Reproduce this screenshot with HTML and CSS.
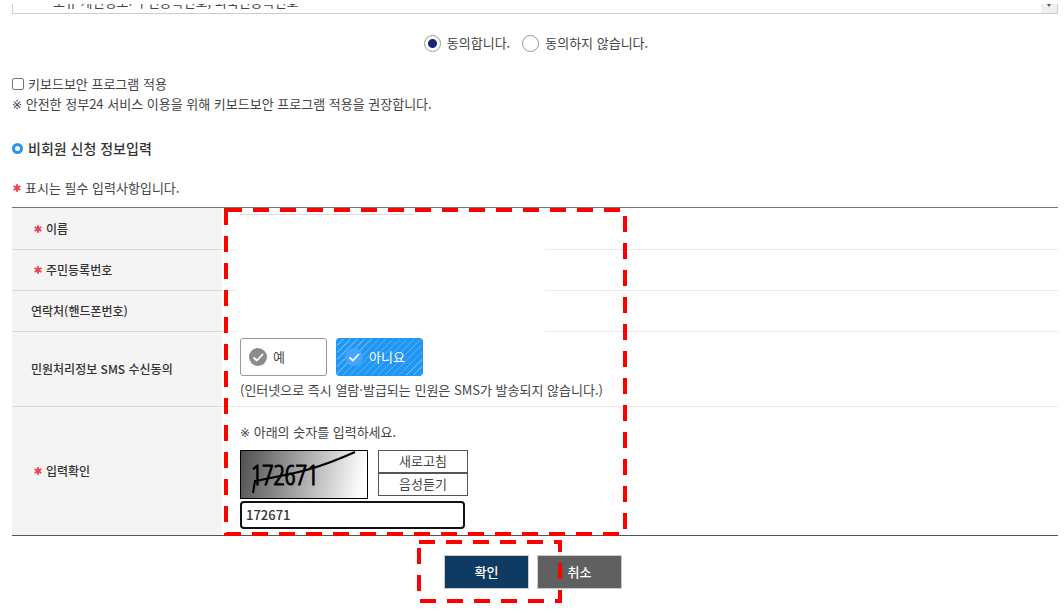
FILE: index.html
```html
<!DOCTYPE html>
<html lang="ko">
<head>
<meta charset="utf-8">
<meta name="viewport" content="width=device-width, initial-scale=1">
<title>비회원 신청 정보입력</title>
<link rel="stylesheet" href="styles.css">
</head>
<body>
<svg class="defs" aria-hidden="true">
  <symbol id="star" viewBox="0 0 8 8"><path d="M4 0.2V7.8M0.6 2L7.4 6M7.4 2L0.6 6" stroke="#ee4350" stroke-width="2" fill="none"/></symbol>
  <symbol id="check" viewBox="0 0 18 18"><circle class="disc" cx="9" cy="9" r="9"/><path d="M4.5 9.5L7.8 12.5L14 6" stroke="#fff" stroke-width="1.8" fill="none"/></symbol>
</svg>
<main class="page">
  <div class="terms">
    <p class="terms-text">보유 개인정보: 주민등록번호, 외국인등록번호</p>
    <span class="terms-scroll"><svg viewBox="0 0 4 3" width="4" height="3"><path d="M0 0H4L2 3Z" fill="#555"/></svg></span>
  </div>

  <form class="form">
    <div class="agree">
      <label class="agree-item"><input class="radio" type="radio" name="agree" checked>동의합니다.</label>
      <label class="agree-item"><input class="radio" type="radio" name="agree">동의하지 않습니다.</label>
    </div>

    <div class="security">
      <label class="security-label"><input class="checkbox" type="checkbox">키보드보안 프로그램 적용</label>
      <p class="line"><span class="note-mark">※</span> 안전한 정부24 서비스 이용을 위해 키보드보안 프로그램 적용을 권장합니다.</p>
    </div>

    <h2 class="heading"><span class="ring"></span>비회원 신청 정보입력</h2>
    <p class="required"><svg class="star"><use href="#star"/></svg>표시는 필수 입력사항입니다.</p>

    <div class="info">
      <table class="table">
        <tr class="row row-first">
          <th scope="row"><label class="name-label" for="name"><svg class="star"><use href="#star"/></svg>이름</label></th>
          <td class="name-cell"><input class="name" id="name" type="text"></td>
        </tr>
        <tr class="row"><th scope="row"><span class="name-label"><svg class="star"><use href="#star"/></svg>주민등록번호</span></th><td></td></tr>
        <tr class="row"><th scope="row">연락처(핸드폰번호)</th><td></td></tr>
        <tr class="row-sms">
          <th scope="row">민원처리정보 SMS 수신동의</th>
          <td>
            <div class="choices">
              <button class="choice" type="button"><svg class="check"><use href="#check"/></svg>예</button>
              <button class="choice choice-on" type="button"><svg class="check"><use href="#check"/></svg>아니요</button>
            </div>
            <p class="sms-note">(인터넷으로 즉시 열람·발급되는 민원은 SMS가 발송되지 않습니다.)</p>
          </td>
        </tr>
        <tr class="row-captcha">
          <th scope="row"><label class="name-label" for="captcha"><svg class="star"><use href="#star"/></svg>입력확인</label></th>
          <td>
            <p class="line"><span class="note-mark">※</span> 아래의 숫자를 입력하세요.</p>
            <div class="captcha">
              <svg class="captcha-image" viewBox="0 0 126 47" role="img" aria-label="숫자 그림">
                <text class="captcha-digits" x="10" y="34">172671</text>
                <path d="M12 42L14 30C50 23 72 20 114 1" stroke="#000" stroke-width="2" fill="none"/>
              </svg>
              <div class="captcha-tools">
                <button class="tool" type="button">새로고침</button>
                <button class="tool" type="button">음성듣기</button>
              </div>
            </div>
            <input class="captcha-input" id="captcha" type="text" value="172671">
          </td>
        </tr>
      </table>
      <div class="mask"></div>
      <svg class="mark mark-fields" aria-hidden="true"><rect x="2" y="2" width="399" height="324"/></svg>
    </div>

    <div class="actions">
      <div class="actions-group">
        <button class="action" type="submit">확인</button>
        <button class="action action-cancel" type="button">취소</button>
        <svg class="mark mark-confirm" aria-hidden="true"><rect x="2" y="2" width="141" height="59"/></svg>
      </div>
    </div>
  </form>
</main>
</body>
</html>
```
FILE: styles.css
```css
* { box-sizing: border-box; }
body {
  margin: 0;
  background: #fff;
  color: #444;
  font: 13px/20px "Noto Sans CJK KR", sans-serif;
}
p, h2 { margin: 0; }
button, input { font: inherit; color: inherit; margin: 0; }
.defs { position: absolute; width: 0; height: 0; }
.page { padding: 4px 6px 24px 12px; }

.terms {
  display: flex;
  justify-content: space-between;
  align-items: flex-end;
  height: 10px;
  overflow: hidden;
  border: 1px solid #ccc;
  border-top: 0;
}
.terms-text { padding-left: 40px; line-height: 18px; padding-bottom: 2px; }
.terms-scroll {
  display: flex;
  justify-content: center;
  width: 16px;
  height: 9px;
  background: #f0f0f0;
}

.agree { display: flex; justify-content: center; gap: 12px; margin-top: 19px; padding-left: 2px; }
.agree-item { display: flex; align-items: center; gap: 6px; }
.radio {
  appearance: none;
  width: 17px;
  height: 17px;
  border: 1px solid #999;
  border-radius: 50%;
  background: #fff;
}
.radio:checked { background: radial-gradient(circle, #1a237e 4px, #fff 5px); }

.security { margin-top: 21px; }
.security-label { display: flex; align-items: center; gap: 4px; }
.checkbox {
  appearance: none;
  width: 12px;
  height: 12px;
  border: 1px solid #767676;
  border-radius: 2px;
}
.note-mark { font-family: "DejaVu Sans", sans-serif; font-size: 12px; line-height: 1; }

.heading {
  display: flex;
  align-items: center;
  gap: 5px;
  margin-top: 24px;
  color: #333;
  font-size: 14px;
  font-weight: 500;
}
.ring { width: 11px; height: 11px; border: 3px solid #2196f3; border-radius: 50%; }
.star { width: 8px; height: 8px; flex: none; }
.required { display: flex; align-items: center; gap: 4px; margin-top: 20px; padding-left: 1px; }

.info { position: relative; margin-top: 9px; }
.table {
  width: 100%;
  border-collapse: separate;
  border-spacing: 0;
  border-top: 1px solid #777;
  border-bottom: 1px solid #555;
}
.table th {
  width: 210px;
  padding: 0 0 0 19px;
  border-bottom: 1px solid #d9d9d9;
  background: #f4f4f4;
  color: #333;
  font-size: 12px;
  font-weight: 500;
  text-align: left;
}
.table td { padding: 0 18px; border-bottom: 1px solid #ebebeb; }
.table tr:last-child > * { border-bottom: 0; }
.row { height: 41px; }
.row-first { height: 42px; }
.row-sms { height: 75px; }
.row-captcha { height: 128px; }
.table .row-captcha td { padding-top: 8px; }
.name-label { display: flex; align-items: center; gap: 4px; padding-left: 3px; }
.table .name-cell { vertical-align: top; padding-top: 6px; }
.name { display: block; width: 174px; height: 27px; border: 1px solid #ddd; }
.mask { position: absolute; left: 224px; top: 8px; width: 309px; height: 118px; background: #fff; }

.choices { display: flex; gap: 9px; }
.choice {
  display: flex;
  align-items: center;
  gap: 6px;
  width: 87px;
  height: 38px;
  padding: 0 8px;
  border: 1px solid #999;
  border-radius: 3px;
  background: #fff;
}
.choice-on {
  border-color: #2196f3;
  background: repeating-linear-gradient(135deg, #2196f3 0 4px, #5ab1f6 4px 5px);
  color: #fff;
}
.check { width: 18px; height: 18px; flex: none; fill: #8c8c8c; }
.choice-on .check { fill: #42a5ff; }
.sms-note { margin-top: 4px; }

.captcha { display: flex; gap: 10px; margin-top: 8px; }
.captcha-image {
  width: 128px;
  height: 49px;
  border: 1px solid #000;
  background: linear-gradient(100deg, #505050, #fff 95%);
}
.captcha-digits {
  font-family: "Open Sans Condensed Light", "Open Sans Condensed", "Roboto Condensed", sans-serif;
  font-size: 28px;
  font-weight: 300;
  fill: #000;
  stroke: #000;
  stroke-width: 1px;
}
.captcha-tools { display: flex; flex-direction: column; width: 90px; }
.tool {
  height: 23px;
  padding: 0;
  border: 1px solid #555;
  background: #fff;
  line-height: 20px;
}
.captcha-input {
  display: block;
  width: 225px;
  height: 28px;
  margin-top: 2px;
  padding: 0 4px;
  border: 2px solid #111;
  border-radius: 4px;
  background: #fff;
  color: #333;
  font-weight: 500;
}

.actions { display: flex; justify-content: center; margin-top: 19px; padding-right: 4px; }
.actions-group { position: relative; display: flex; gap: 8px; }
.action {
  width: 85px;
  height: 34px;
  padding: 0;
  border: 1px solid #ccc;
  background: #0f3a62;
  color: #fff;
  font-weight: 500;
}
.action-cancel { background: #606060; }

.mark { position: absolute; fill: none; stroke: #f00; stroke-width: 4; stroke-dasharray: 16 11; pointer-events: none; }
.mark-fields { left: 212px; top: 1px; width: 403px; height: 328px; }
.mark-confirm { left: -27px; top: -15px; width: 145px; height: 63px; }
```
